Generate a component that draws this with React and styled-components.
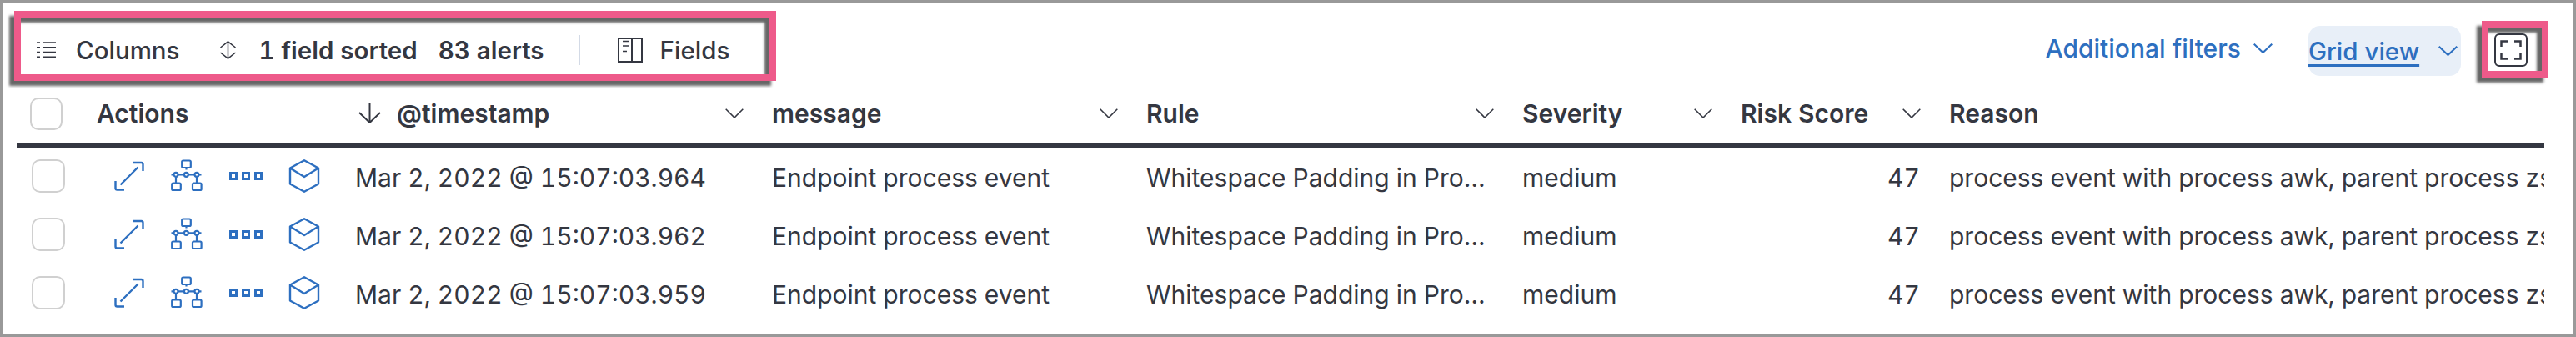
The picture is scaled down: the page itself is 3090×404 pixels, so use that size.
import React from "react";
import styled, { createGlobalStyle } from "styled-components";

const ink = "#343741";
const blue = "#2d6fc0";
const pink = "#ee5a8a";
const dropShadow = "-6px 6px 3px #666666, inset -6px 6px 3px #666666";

const GlobalStyle = createGlobalStyle`
  html, body {
    margin: 0;
    padding: 0;
    background: #ffffff;
  }
  * {
    box-sizing: border-box;
  }
`;
const Frame = styled.div`
  width: 3090px;
  height: 404px;
  border: 4px solid #999999;
  background: #ffffff;
  font-family: Inter, "Liberation Sans", sans-serif;
  font-size: 30px;
  font-feature-settings: "tnum";
  color: ${ink};
  overflow: hidden;
`;
const Toolbar = styled.div`
  display: flex;
  justify-content: space-between;
  align-items: flex-start;
  height: 96px;
  padding: 9px 29px 0 13px;
`;
const Highlighted = styled.div`
  display: flex;
  align-items: center;
  width: 914px;
  height: 84px;
  padding: 10px 0 0 19px;
  border: 8px solid ${pink};
  box-shadow: ${dropShadow};
  font-size: 29.5px;
`;
const ToolItem = styled.span`
  display: flex;
  align-items: center;
  gap: ${(props) => props.$gap || 0}px;
  margin-left: ${(props) => props.$left || 0}px;
  font-weight: ${(props) => props.$weight || 500};
  white-space: nowrap;
`;
const Separator = styled.span`
  width: 2px;
  height: 36px;
  margin-left: 41px;
  background: #d3dae6;
`;
const RightTools = styled.div`
  display: flex;
  align-items: flex-start;
`;
const FilterLink = styled.span`
  display: flex;
  align-items: center;
  gap: 15px;
  height: 60px;
  margin: 15px 43px 0 0;
  color: ${blue};
  font-weight: 500;
  white-space: nowrap;
`;
const GridViewButton = styled.span`
  display: flex;
  align-items: center;
  justify-content: space-between;
  width: 183px;
  height: 60px;
  margin: 18px 25px 0 0;
  padding-right: 4px;
  border-radius: 14px;
  background: #e8eff8;
  color: ${blue};
  font-size: 29.5px;
  font-weight: 500;
  white-space: nowrap;
`;
const GridViewLabel = styled.span`
  text-decoration: underline;
  text-decoration-thickness: 3px;
  text-underline-offset: 5px;
`;
const FullscreenBox = styled.div`
  display: flex;
  align-items: center;
  justify-content: center;
  width: 80px;
  height: 68px;
  margin-top: 12px;
  padding: 2px 10px 0 0;
  border: 8px solid ${pink};
  box-shadow: ${dropShadow};
`;
const Table = styled.div`
  width: 3032px;
  margin-left: 16px;
`;
const HeaderRow = styled.div`
  display: grid;
  grid-template-columns: 96px 310px 500px 449px 451px 262px 250px 714px;
  height: 77px;
  border-bottom: 5px solid ${ink};
`;
const BodyRow = styled.div`
  display: grid;
  grid-template-columns: 96px 310px 500px 449px 451px 262px 250px 714px;
  height: 70px;
  padding-bottom: 2px;
`;
const HeaderCell = styled.div`
  display: flex;
  align-items: center;
  justify-content: space-between;
  padding: 0 34px 0 ${(props) => props.$left || 0}px;
  font-weight: 600;
  white-space: nowrap;
`;
const HeaderLabel = styled.span`
  display: flex;
  align-items: center;
  gap: 19px;
`;
const Cell = styled.div`
  align-self: center;
  padding-top: 3px;
  padding-right: ${(props) => props.$right || 0}px;
  font-weight: 400;
  text-align: ${(props) => props.$align || "left"};
  white-space: nowrap;
  overflow: hidden;
  text-overflow: ${(props) => (props.$clip ? "clip" : "ellipsis")};
`;
const CheckCell = styled.div`
  display: flex;
  align-items: center;
  padding-left: ${(props) => props.$left}px;
`;
const Checkbox = styled.span`
  display: block;
  width: ${(props) => props.$size}px;
  height: ${(props) => props.$size}px;
  border: 2px solid #d0d0d0;
  border-radius: 10px;
  background: #ffffff;
`;
const ActionsCell = styled.div`
  display: flex;
  align-items: center;
  gap: 30px;
  padding-left: 19px;
`;

const ListIcon = () => (
  <svg width="23" height="20" viewBox="0 0 23 20" fill="none" stroke={ink} strokeWidth="1.5">
    <path d="M0 1h4M7 1h16M0 6.7h4M7 6.7h16M0 12.4h4M7 12.4h16M0 18.2h4M7 18.2h16" />
  </svg>
);
const SortIcon = () => (
  <svg width="19" height="22" viewBox="0 0 19 22" fill="none" stroke={ink} strokeWidth="1.5">
    <path d="M.5 8 9.5.8l9 7.2M.5 14l9 7.2 9-7.2M9.5 1v20" />
  </svg>
);
const FieldsIcon = () => (
  <svg width="30" height="30" viewBox="0 0 30 30" fill="none" stroke={ink} strokeWidth="2">
    <path d="M1 1h28v28H1zM17 1v28" />
    <path d="M6 4.5h8M6 10h8M6 16.5h5" strokeWidth="1.6" />
  </svg>
);
const Caret = ({ color = ink, width = 22, height = 12, stroke = 1.6 }) => (
  <svg width={width} height={height} viewBox="0 0 22 12" fill="none" stroke={color} strokeWidth={stroke} preserveAspectRatio="none">
    <path d="M.7.7 11 11 21.3.7" />
  </svg>
);
const SortArrow = () => (
  <svg width="27" height="24" viewBox="0 0 27 24" fill="none" stroke={ink} strokeWidth="2">
    <path d="M13.5 0v23M1 11l12.5 12L26 11" />
  </svg>
);
const FullscreenIcon = () => (
  <svg width="40" height="40" viewBox="0 0 40 40" fill="none" stroke={ink}>
    <rect x="1" y="1" width="38" height="38" rx="5" strokeWidth="2" />
    <path d="M16 9.5H8.5V16M24 9.5h7.5V16M16 30.5H8.5V24M24 30.5h7.5V24" strokeWidth="2.5" />
  </svg>
);
const ExpandIcon = () => (
  <svg width="40" height="40" viewBox="0 0 40 40" fill="none" stroke={blue} strokeWidth="2.4">
    <path d="M25 4h9.5q2 0 2 2v8M3.5 26v8.5q0 2 2 2H14M9.5 30.5l21-21" />
  </svg>
);
const NetworkIcon = () => (
  <svg width="40" height="40" viewBox="0 0 40 40" fill="none" stroke={blue} strokeWidth="2.2">
    <rect x="13.2" y="1.5" width="10.6" height="8.5" rx="1.5" />
    <rect x="1.2" y="28.5" width="10.6" height="8.5" rx="1.5" />
    <rect x="26" y="28.5" width="10.6" height="8.5" rx="1.5" />
    <path d="M18.5 10v2.5M.5 18.3h36M6 21v7.5M31 21v7.5" />
    <circle cx="6" cy="18.3" r="2.5" fill="#ffffff" />
    <circle cx="18.4" cy="18.3" r="2.5" fill="#ffffff" />
    <circle cx="31" cy="18.3" r="2.5" fill="#ffffff" />
  </svg>
);
const DotsIcon = () => (
  <svg width="40" height="40" viewBox="0 0 40 40" fill="none" stroke={blue} strokeWidth="3">
    <rect x="1.5" y="16.5" width="7" height="7" />
    <rect x="16.5" y="16.5" width="7" height="7" />
    <rect x="31.5" y="16.5" width="7" height="7" />
  </svg>
);
const CubeIcon = () => (
  <svg width="40" height="40" viewBox="0 0 40 40" fill="none" stroke={blue} strokeWidth="2.4" strokeLinejoin="round">
    <path d="M20 1.3 37 10.5v19L20 38.8 3 29.5v-19zM3 10.5 20 21l17-10.5" />
  </svg>
);

const alerts = [
  { id: 1, time: "Mar 2, 2022 @ 15:07:03.964" },
  { id: 2, time: "Mar 2, 2022 @ 15:07:03.962" },
  { id: 3, time: "Mar 2, 2022 @ 15:07:03.959" },
];

export default function App() {
  return (
    <Frame>
      <GlobalStyle />
      <Toolbar>
        <Highlighted>
          <ToolItem $gap={24}>
            <ListIcon />
            Columns
          </ToolItem>
          <ToolItem $gap={27} $left={49} $weight={600}>
            <SortIcon />1 field sorted
          </ToolItem>
          <ToolItem $left={25} $weight={600}>
            83 alerts
          </ToolItem>
          <Separator />
          <ToolItem $gap={21} $left={45}>
            <FieldsIcon />
            Fields
          </ToolItem>
        </Highlighted>
        <RightTools>
          <FilterLink>
            Additional filters
            <Caret color={blue} width={23} stroke={2} />
          </FilterLink>
          <GridViewButton>
            <GridViewLabel>Grid view</GridViewLabel>
            <Caret color={blue} width={23} stroke={2} />
          </GridViewButton>
          <FullscreenBox>
            <FullscreenIcon />
          </FullscreenBox>
        </RightTools>
      </Toolbar>
      <Table>
        <HeaderRow>
          <CheckCell $left={16}>
            <Checkbox $size={39} />
          </CheckCell>
          <HeaderCell>Actions</HeaderCell>
          <HeaderCell $left={4}>
            <HeaderLabel>
              <SortArrow />
              @timestamp
            </HeaderLabel>
            <Caret />
          </HeaderCell>
          <HeaderCell>
            message
            <Caret />
          </HeaderCell>
          <HeaderCell>
            Rule
            <Caret />
          </HeaderCell>
          <HeaderCell>
            Severity
            <Caret />
          </HeaderCell>
          <HeaderCell>
            Risk Score
            <Caret />
          </HeaderCell>
          <HeaderCell>Reason</HeaderCell>
        </HeaderRow>
        {alerts.map((alert) => (
          <BodyRow key={alert.id}>
            <CheckCell $left={18}>
              <Checkbox $size={40} />
            </CheckCell>
            <ActionsCell>
              <ExpandIcon />
              <NetworkIcon />
              <DotsIcon />
              <CubeIcon />
            </ActionsCell>
            <Cell>{alert.time}</Cell>
            <Cell>Endpoint process event</Cell>
            <Cell $right={33}>Whitespace Padding in Process Command Line</Cell>
            <Cell>medium</Cell>
            <Cell $right={35} $align="right">
              47
            </Cell>
            <Cell $clip>process event with process awk, parent process zsh, by root on host</Cell>
          </BodyRow>
        ))}
      </Table>
    </Frame>
  );
}
